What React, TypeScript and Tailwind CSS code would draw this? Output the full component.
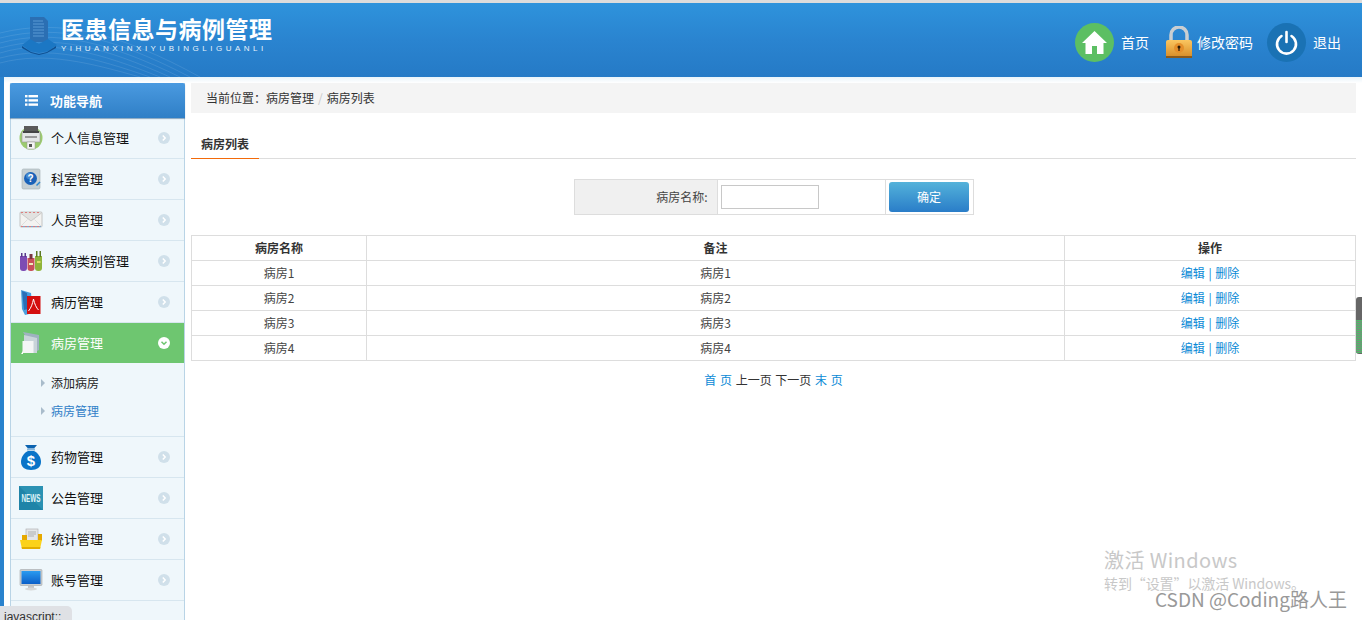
import React from "react";

const cjk = "font-['Noto_Sans_CJK_SC','Liberation_Sans',sans-serif]";

function Printer() {
  return (
    <svg width="26" height="26" viewBox="0 0 26 26">
      <circle cx="13" cy="13" r="11.5" fill="#9ccb6e" />
      <rect x="6" y="1" width="14" height="6" fill="#5a5a5a" />
      <rect x="4" y="7" width="18" height="10" fill="#e4e6e6" stroke="#9a9a9a" strokeWidth="0.6" />
      <rect x="5" y="6" width="16" height="2" fill="#444" />
      <rect x="7" y="11" width="12" height="2" fill="#9a9a9a" />
      <rect x="9" y="17" width="8" height="7" fill="#f5f5f5" stroke="#999" strokeWidth="0.5" />
      <rect x="11" y="19" width="3" height="3" fill="#555" />
    </svg>
  );
}
function Help() {
  return (
    <svg width="22" height="22" viewBox="0 0 22 22">
      <rect x="2" y="1" width="18" height="20" rx="1.5" fill="#c6d0d4" stroke="#a2aeb2" strokeWidth="0.6" />
      <circle cx="10.500" cy="10.500" r="6.500" fill="#1a62b8" />
      <circle cx="9" cy="8" r="3" fill="#6fb0ea" opacity="0.5" />
      <text x="10.500" y="14" textAnchor="middle" fontSize="10" fontWeight="700" fill="#fff" fontFamily="Liberation Sans">?</text>
      <path d="M16 17l3.500-3.500 1 1L17 18z" fill="#2a86d0" />
    </svg>
  );
}
function Mail() {
  return (
    <svg width="24" height="20" viewBox="0 0 24 20">
      <rect x="1" y="2" width="22" height="15" rx="1" fill="#f3f3f1" stroke="#b8b8b8" strokeWidth="0.8" />
      <path d="M1.500 3l10.500 8 10.500-8" fill="#e2e2e0" stroke="#bcbcbc" strokeWidth="0.7" />
      <path d="M1.500 16.500l7-7M22.500 16.500l-7-7" stroke="#d0d0d0" strokeWidth="0.6" />
      <path d="M2 16.500h20" stroke="#d66" strokeWidth="0.8" strokeDasharray="2 2" />
      <path d="M2 16.500h20" stroke="#69c" strokeWidth="0.8" strokeDasharray="2 2" strokeDashoffset="2" />
      <path d="M2 2.500h20" stroke="#d66" strokeWidth="0.8" strokeDasharray="2 2" />
    </svg>
  );
}
function Tubes() {
  return (
    <svg width="22" height="20" viewBox="0 0 22 20">
      <path d="M0 5h7v12a3 3 0 0 1-3 3H3a3 3 0 0 1-3-3z" fill="#7d4cb4" />
      <path d="M7.500 7h7v10a3 3 0 0 1-3 3h-1a3 3 0 0 1-3-3z" fill="#c9505a" />
      <path d="M15 5h7v12a3 3 0 0 1-3 3h-1a3 3 0 0 1-3-3z" fill="#8fb43a" />
      <rect x="1" y="2" width="1.500" height="4" fill="#5a3a8c" />
      <rect x="4.500" y="2" width="1.500" height="4" fill="#5a3a8c" />
      <rect x="9.500" y="3" width="3" height="5" fill="#7a3540" />
      <rect x="16" y="0" width="1.500" height="6" fill="#5c7a22" />
      <rect x="19.500" y="0" width="1.500" height="6" fill="#5c7a22" />
      <rect x="9" y="12" width="4" height="2" fill="#eeb" />
      <rect x="17" y="10" width="3.500" height="2" fill="#dd6" />
    </svg>
  );
}
function Pdf() {
  return (
    <svg width="20" height="25" viewBox="0 0 20 25">
      <path d="M0 0l10 3 2 20-8 2-3-6z" fill="#4aa0de" />
      <path d="M1 1l5 2 1 16-4 1z" fill="#2a6fb8" />
      <rect x="6" y="6" width="13.500" height="18" fill="#d40f0f" />
      <path d="M12.500 9c-1 5-2.500 9-5 12M12.500 9c1 5 3 9 5 11" stroke="#fff" strokeWidth="1" fill="none" />
    </svg>
  );
}
function Files() {
  return (
    <svg width="20" height="23" viewBox="0 0 20 23">
      <path d="M2 0l16 3v15l-4 2z" fill="#9fb2c0" />
      <path d="M3 3l13 3v15H3z" fill="#c9d4da" />
      <path d="M1.500 9h11v12h-11z" fill="#f4f6f6" />
      <path d="M0 22l2-3v3z" fill="#fff" />
    </svg>
  );
}
function Money() {
  return (
    <svg width="22" height="25" viewBox="0 0 22 25">
      <path d="M5 0h12l-3 3.500h-6z" fill="#0b63b0" />
      <rect x="7" y="3.500" width="8" height="2" fill="#88b8de" />
      <path d="M8 6c-4 2-7 6-7 11 0 5 4 8 10 8s10-3 10-8c0-5-3-9-7-11z" fill="#0a74c8" />
      <text x="11" y="21" textAnchor="middle" fontSize="15" fontWeight="700" fill="#fff" fontFamily="Liberation Sans">$</text>
    </svg>
  );
}
function News() {
  return (
    <svg width="24" height="24" viewBox="0 0 24 24">
      <rect width="24" height="24" fill="#1f84a8" />
      <path d="M0 0l24 24V0z" fill="#3aa3c0" opacity="0.45" />
      <text x="12" y="16" textAnchor="middle" fontSize="10" fontWeight="700" fill="#dff4f8" fontFamily="Liberation Sans" textLength="19" lengthAdjust="spacingAndGlyphs">NEWS</text>
    </svg>
  );
}
function Folder() {
  return (
    <svg width="24" height="22" viewBox="0 0 24 22">
      <rect x="7" y="1" width="12" height="12" fill="#e4e6e8" stroke="#aaa" strokeWidth="0.6" />
      <path d="M9 4h8M9 6h8M9 8h6" stroke="#999" strokeWidth="0.7" />
      <path d="M3 7h5v6H3z" fill="#e6a900" />
      <path d="M19 6h4v7h-4z" fill="#e6a900" />
      <path d="M1 12h22l-2 9H3z" fill="#fbd21a" />
      <path d="M3 21h18l.4-2H2.600z" fill="#e3ae00" />
    </svg>
  );
}
function Monitor() {
  return (
    <svg width="24" height="22" viewBox="0 0 24 22">
      <rect x="1" y="0.500" width="22" height="16" rx="1" fill="#c9cdd0" stroke="#a5a8aa" strokeWidth="0.6" />
      <defs>
        <linearGradient id="scr" x1="0" y1="0" x2="0" y2="1">
          <stop offset="0" stopColor="#2a9bf0" />
          <stop offset="1" stopColor="#0b5fc8" />
        </linearGradient>
      </defs>
      <rect x="2.500" y="2" width="19" height="13" fill="url(#scr)" />
      <rect x="9" y="17" width="6" height="2" fill="#c4c6c8" />
      <ellipse cx="12" cy="20" rx="6" ry="1.500" fill="#d8d8d8" />
    </svg>
  );
}

function Arrow({ open }: { open?: boolean }) {
  return (
    <svg width="12" height="12" viewBox="0 0 12 12" className="shrink-0">
      <circle cx="6" cy="6" r="6" fill={open ? "#ffffff" : "#d0e0ea"} />
      {open ? (
        <path d="M3.500 4.800L6 7.200l2.500-2.400" fill="none" stroke="#6ec670" strokeWidth="1.500" />
      ) : (
        <path d="M4.800 3.500L7.200 6 4.800 8.500" fill="none" stroke="#ffffff" strokeWidth="1.500" />
      )}
    </svg>
  );
}

function NavItem({ icon, label, open }: { icon: React.ReactNode; label: string; open?: boolean }) {
  return (
    <div
      className={`flex items-center pr-[14px] text-[13px] ${
        open ? "h-[40px] bg-[#6ec670] text-white" : "h-[41px] border-b border-[#d7e6ef] text-[#111]"
      }`}
    >
      <div className="flex w-[40px] shrink-0 items-center justify-center">{icon}</div>
      <span className="flex-1 whitespace-nowrap">{label}</span>
      <Arrow open={open} />
    </div>
  );
}

function SubItem({ label, active }: { label: string; active?: boolean }) {
  return (
    <div className={`flex h-[28px] items-center text-[12px] ${active ? "text-[#2f80c8]" : "text-[#222]"}`}>
      <span className="ml-[30px] mr-[6px] h-0 w-0 border-y-[4px] border-l-[4px] border-y-transparent border-l-[#a9bccb]" />
      {label}
    </div>
  );
}

const rows = ["病房1", "病房2", "病房3", "病房4"];

export default function App() {
  return (
    <div className={`relative flex h-[620px] w-[1362px] flex-col overflow-hidden bg-white ${cjk}`}>
      <div className="h-[3px] shrink-0 bg-[#dcdcdc]" />
      <header className="relative flex h-[74px] shrink-0 items-start justify-between overflow-hidden bg-gradient-to-b from-[#2e93dc] via-[#2a84d0] to-[#257ac6]">
        <svg className="absolute left-0 top-0" width="360" height="74" viewBox="0 0 360 74" fill="none" stroke="#ffffff" strokeOpacity="0.1" strokeWidth="1">
          <path d="M0 30C60 15 120 30 200 74" />
          <path d="M0 35C60 20 115 35 190 74" />
          <path d="M0 40C55 25 110 40 180 74" />
          <path d="M0 45C55 30 105 45 170 74" />
          <path d="M0 50C50 35 100 50 160 74" />
          <path d="M0 55C50 42 95 55 150 74" />
          <path d="M0 60C45 48 90 60 140 74" />
        </svg>
        <div className="relative flex items-start pl-[22px] pt-[11px]">
          <svg width="36" height="38" viewBox="0 0 36 38" className="mr-[3px] mt-[3px]">
            <path d="M8 0h14l4 4v21H8z" fill="#2b6fb3" />
            <path d="M11 4h10M11 7h11M11 10h11M11 13h11M11 16h11M11 19h11" stroke="#5b9ad4" strokeWidth="1" />
            <path d="M0 28l8-6 9 5 9-5 9 6-9 6-9 2-9-2z" fill="#1b77c4" />
            <path d="M0 29l9 6 8 2 8-2 9-6v2l-9 5-8 2-8-2-9-5z" fill="#0f4f90" />
          </svg>
          <div className="flex flex-col">
            <div className="whitespace-nowrap text-[23px] font-bold leading-[28px] tracking-[0.5px] text-white">医患信息与病例管理</div>
            <div className="mt-[2px] whitespace-nowrap font-['Liberation_Sans',sans-serif] text-[8px] leading-[10px] tracking-[3.500px] text-[#e6f2fb]">YIHUANXINXIYUBINGLIGUANLI</div>
          </div>
        </div>
        <div className="relative flex items-center pr-[21px] pt-[20px] text-[14px] text-white">
          <div className="flex h-[39px] w-[39px] items-center justify-center rounded-full bg-[#5cbf63]">
            <svg width="27" height="26" viewBox="0 0 27 26" fill="#fff">
              <path d="M13.500 1L1 13h3.500v11h6.500v-8h5v8h6.500V13H26z" />
            </svg>
          </div>
          <span className="ml-[7px] w-[44px]">首页</span>
          <svg width="28" height="34" viewBox="0 0 28 34" className="mr-[4px]">
            <defs>
              <linearGradient id="lk" x1="0" y1="0" x2="0" y2="1">
                <stop offset="0" stopColor="#fbc660" />
                <stop offset="1" stopColor="#d58a25" />
              </linearGradient>
            </defs>
            <path d="M6 15V9a8 8 0 0 1 16 0v6" fill="none" stroke="#c9ced2" strokeWidth="3.500" />
            <rect x="1" y="14" width="26" height="18" rx="2" fill="url(#lk)" />
            <rect x="1" y="30" width="26" height="2" fill="#8a5a1c" />
            <circle cx="14" cy="22" r="5" fill="#e58f2a" />
            <circle cx="14" cy="21" r="1.500" fill="#2a1a08" />
            <rect x="13.400" y="21" width="1.200" height="4" fill="#2a1a08" />
          </svg>
          <span className="w-[70px]">修改密码</span>
          <div className="flex h-[39px] w-[39px] items-center justify-center rounded-full bg-[#1a72b4]">
            <svg width="23" height="25" viewBox="0 0 23 25" fill="none" stroke="#fff" strokeWidth="2.600" strokeLinecap="round">
              <path d="M6.500 6A9.500 9.500 0 1 0 16.500 6" />
              <path d="M11.500 2v10" />
            </svg>
          </div>
          <span className="ml-[7px]">退出</span>
        </div>
      </header>
      <div className="flex min-h-0 flex-1 border-l-[4px] border-[#2a82cd] bg-gradient-to-b from-[#e8f3fa] to-white to-[6px]">
        <aside className="ml-[6px] mt-[6px] w-[175px] shrink-0 border-x border-[#b9d4e6] bg-[#eff7fb]">
          <div className="-mx-px flex h-[35px] items-center rounded-t-[2px] bg-gradient-to-b from-[#4a9ae0] to-[#2f7fc6] text-[13px] font-bold text-white shadow-[0_1px_1px_rgba(30,80,130,0.5)]">
            <svg width="13" height="11" viewBox="0 0 13 11" fill="#fff" className="ml-[15px] mr-[12px]">
              <rect x="0" y="0" width="2.500" height="2.400" />
              <rect x="3.500" y="0" width="9.500" height="2.400" />
              <rect x="0" y="4.200" width="2.500" height="2.400" />
              <rect x="3.500" y="4.200" width="9.500" height="2.400" />
              <rect x="0" y="8.400" width="2.500" height="2.400" />
              <rect x="3.500" y="8.400" width="9.500" height="2.400" />
            </svg>
            功能导航
          </div>
          <NavItem icon={<Printer />} label="个人信息管理" />
          <NavItem icon={<Help />} label="科室管理" />
          <NavItem icon={<Mail />} label="人员管理" />
          <NavItem icon={<Tubes />} label="疾病类别管理" />
          <NavItem icon={<Pdf />} label="病历管理" />
          <NavItem icon={<Files />} label="病房管理" open />
          <div className="h-[74px] border-b border-[#d7e6ef] pt-[6px]">
            <SubItem label="添加病房" />
            <SubItem label="病房管理" active />
          </div>
          <NavItem icon={<Money />} label="药物管理" />
          <NavItem icon={<News />} label="公告管理" />
          <NavItem icon={<Folder />} label="统计管理" />
          <NavItem icon={<Monitor />} label="账号管理" />
        </aside>
        <main className="ml-[6px] mt-[6px] w-[1165px] shrink-0 text-[12px] text-[#444]">
          <div className="flex h-[30px] items-center bg-[#f4f4f4] pl-[15px] text-[#333]">
            当前位置：病房管理<span className="mx-[4px] text-[#c8c8c8]">/</span>病房列表
          </div>
          <div className="mt-[17px] h-[29px] border-b border-[#dddddd]">
            <div className="flex h-[29px] w-[68px] items-center justify-center border-b-[1px] border-[#f26a0a] font-bold text-[#333]">病房列表</div>
          </div>
          <div className="mt-[20px] flex justify-center">
            <table className="w-[400px] table-fixed border-collapse">
              <tbody>
                <tr className="h-[35px]">
                  <td className="w-[143px] border border-[#dddddd] bg-[#f0f0f0] pr-[9px] text-right">病房名称:</td>
                  <td className="w-[168px] border border-[#dddddd] pl-[3px]">
                    <input className="block h-[24px] w-[98px] border border-[#c8c8c8] bg-white" />
                  </td>
                  <td className="border border-[#dddddd] pl-[3px]">
                    <button className="flex h-[30px] w-[80px] items-center justify-center rounded-[3px] bg-gradient-to-b from-[#54b2da] to-[#2a7dc8] pl-[1px] text-[12px] text-white">确定</button>
                  </td>
                </tr>
              </tbody>
            </table>
          </div>
          <table className="mt-[20px] w-[1165px] table-fixed border-collapse text-center">
            <colgroup>
              <col className="w-[175px]" />
              <col className="w-[698px]" />
              <col />
            </colgroup>
            <thead>
              <tr className="h-[25px] font-bold text-[#333]">
                <th className="border border-[#dddddd] pb-[1px]">病房名称</th>
                <th className="border border-[#dddddd] pb-[1px]">备注</th>
                <th className="border border-[#dddddd] pb-[1px]">操作</th>
              </tr>
            </thead>
            <tbody>
              {rows.map((r) => (
                <tr key={r} className="h-[25px]">
                  <td className="border border-[#dddddd] pb-[1px]">{r}</td>
                  <td className="border border-[#dddddd] pb-[1px]">{r}</td>
                  <td className="border border-[#dddddd] pb-[1px] text-[#0a8ad6] [word-spacing:1px]">编辑 | 删除</td>
                </tr>
              ))}
            </tbody>
          </table>
          <div className="mt-[10px] text-center text-[#333] [word-spacing:1px]">
            <span className="text-[#0a8ad6]">首 页</span> 上一页 下一页 <span className="text-[#0a8ad6]">末 页</span>
          </div>
        </main>
      </div>
      <div className="absolute bottom-0 left-0 h-[14px] w-[72px] overflow-hidden rounded-tr-[5px] bg-[#dfe1e5] pl-[4px] font-['Liberation_Sans',sans-serif] text-[12px] leading-[22px] text-[#333]">javascript::</div>
      <div className="absolute right-0 top-[297px] h-[57px] w-[6px] overflow-hidden rounded-l-[3px] bg-[#666666]">
        <div className="mt-[23px] h-[33px] bg-[repeating-linear-gradient(to_bottom,#4fb868_0px,#4fb868_1px,#7a8a7e_1px,#7a8a7e_2px)]" />
      </div>
      <div className="absolute left-[1104px] top-[546px] whitespace-nowrap text-[20px] leading-[28px] tracking-[0.4px] text-[#c8c8c8]">激活 Windows</div>
      <div className="absolute left-[1104px] top-[574px] whitespace-nowrap text-[14px] leading-[18px] tracking-[-0.1px] text-[#c8c8c8]">转到“设置”以激活 Windows。</div>
      <div className="absolute left-[1155px] top-[587px] whitespace-nowrap text-[19px] leading-[24px] text-[#999999]">CSDN @Coding路人王</div>
    </div>
  );
}
